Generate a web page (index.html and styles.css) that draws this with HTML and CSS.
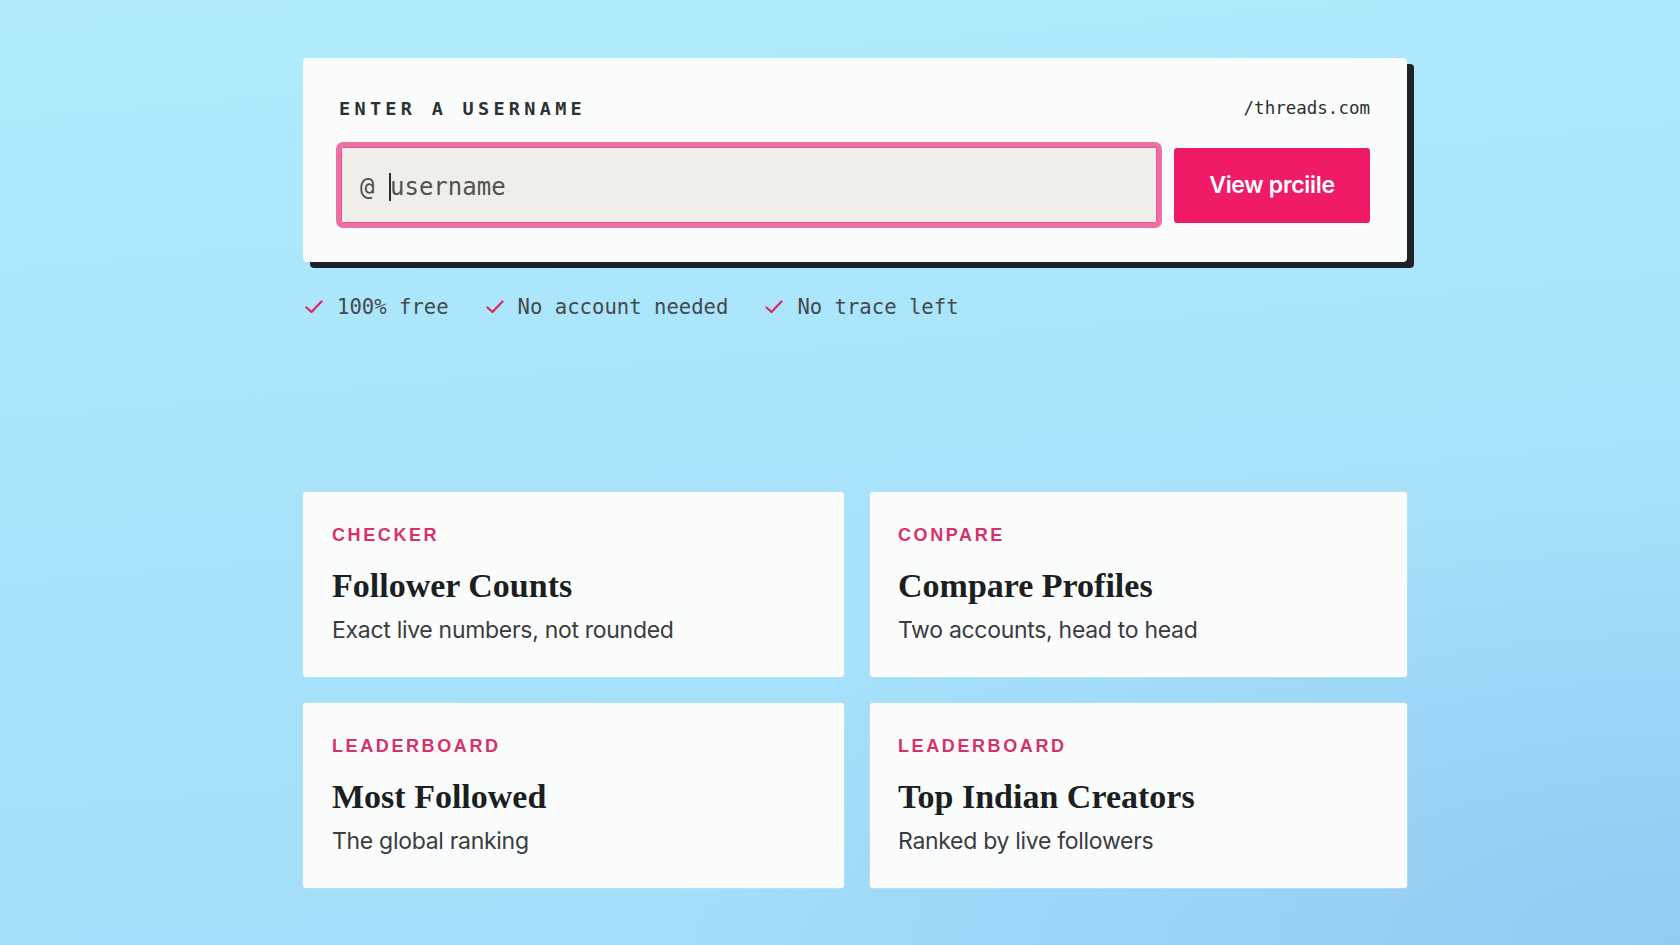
FILE: index.html
```html
<!DOCTYPE html>
<html lang="en">
<head>
<meta charset="utf-8">
<title>Threads profile viewer</title>
<link rel="stylesheet" href="styles.css">
</head>
<body>
<main class="page">
  <section class="search-card">
    <div class="search-head">
      <span class="search-label">ENTER A USERNAME</span>
      <span class="search-domain">/threads.com</span>
    </div>
    <div class="search-row">
      <div class="field">
        <span class="field-at">@</span>
        <span class="field-caret"></span>
        <span class="field-placeholder">username</span>
      </div>
      <button class="view-btn" type="button">View prciile</button>
    </div>
  </section>

  <ul class="perks">
    <li class="perk">
      <svg class="tick" viewBox="0 0 18 14" width="18" height="14"><path d="M1.5 7.5 L6.5 12 L16.5 1.5"/></svg>
      <span>100% free</span>
    </li>
    <li class="perk">
      <svg class="tick" viewBox="0 0 18 14" width="18" height="14"><path d="M1.5 7.5 L6.5 12 L16.5 1.5"/></svg>
      <span>No account needed</span>
    </li>
    <li class="perk">
      <svg class="tick" viewBox="0 0 18 14" width="18" height="14"><path d="M1.5 7.5 L6.5 12 L16.5 1.5"/></svg>
      <span>No trace left</span>
    </li>
  </ul>

  <section class="tools">
    <a class="tool" href="#">
      <span class="tool-tag">CHECKER</span>
      <span class="tool-title">Follower Counts</span>
      <span class="tool-desc">Exact live numbers, not rounded</span>
    </a>
    <a class="tool" href="#">
      <span class="tool-tag">CONPARE</span>
      <span class="tool-title">Compare Profiles</span>
      <span class="tool-desc">Two accounts, head to head</span>
    </a>
    <a class="tool" href="#">
      <span class="tool-tag">LEADERBOARD</span>
      <span class="tool-title">Most Followed</span>
      <span class="tool-desc">The global ranking</span>
    </a>
    <a class="tool" href="#">
      <span class="tool-tag">LEADERBOARD</span>
      <span class="tool-title">Top Indian Creators</span>
      <span class="tool-desc">Ranked by live followers</span>
    </a>
  </section>
</main>
</body>
</html>
```

FILE: styles.css
```css
* {
  box-sizing: border-box;
}

html,
body {
  margin: 0;
  height: 100%;
}

body {
  background:
    radial-gradient(ellipse 60% 50% at 100% 100%, rgba(140, 196, 240, 0.75), rgba(140, 196, 240, 0) 100%),
    linear-gradient(175deg, #b1ebfd 0%, #a9e4fb 45%, #a3ddfa 100%);
  font-family: "Liberation Sans", Arial, sans-serif;
  overflow: hidden;
}

.page {
  width: 1104px;
  margin: 0 0 0 303px;
  padding-top: 58px;
}

/* search card */
.search-card {
  background: #fbfdfd;
  border-radius: 4px;
  box-shadow: 7px 6px 0 #1d2226;
  padding: 38px 37px 34px 33px;
}

.search-head {
  display: flex;
  justify-content: space-between;
  align-items: center;
  height: 24px;
  margin-bottom: 22px;
}

.search-label {
  font-family: "DejaVu Sans Mono", monospace;
  font-weight: 700;
  font-size: 18.5px;
  letter-spacing: 4.3px;
  color: #2e3133;
  padding-left: 3px;
}

.search-domain {
  font-family: "DejaVu Sans Mono", monospace;
  font-size: 17.5px;
  color: #2b2e30;
}

.search-row {
  display: flex;
  align-items: center;
  gap: 12px;
}

.field {
  flex: 1;
  height: 86px;
  display: flex;
  align-items: center;
  background: #efeee9;
  border: 5px solid #ed6fa6;
  border-radius: 7px;
  box-shadow: inset 0 0 0 1px #e5558f;
  padding: 3px 0 0 19px;
  font-family: "DejaVu Sans Mono", monospace;
  font-size: 24px;
  color: #4b4d4f;
}

.field-at {
  width: 29px;
}

.field-caret {
  width: 2px;
  height: 28px;
  background: #2b2d2f;
  margin-right: -1px;
}

.field-placeholder {
  color: #4f5153;
}

.view-btn {
  width: 196px;
  height: 75px;
  border: 0;
  border-radius: 3px;
  background: #ef1a68;
  color: #fff;
  font-family: Inter, "Liberation Sans", sans-serif;
  font-weight: 600;
  font-size: 23px;
  letter-spacing: -0.3px;
}

/* perks row */
.perks {
  list-style: none;
  margin: 31px 0 0;
  padding: 0 0 0 2px;
  display: flex;
  gap: 37px;
  height: 28px;
}

.perk {
  display: flex;
  align-items: center;
  gap: 14px;
  font-family: "DejaVu Sans Mono", monospace;
  font-size: 20.6px;
  line-height: 28px;
  color: #45494c;
}

.tick {
  fill: none;
  stroke: #e3245f;
  stroke-width: 2.2;
  stroke-linecap: round;
  stroke-linejoin: round;
}

/* tool cards */
.tools {
  margin-top: 171px;
  display: grid;
  grid-template-columns: 541px 537px;
  gap: 26px;
}

.tool {
  display: flex;
  flex-direction: column;
  height: 185px;
  padding: 33px 28px 0 29px;
  background: #fbfdfd;
  border-radius: 3px;
  box-shadow: 0 0 0 1px rgba(200, 225, 235, 0.5);
  text-decoration: none;
}

.tool + .tool:nth-child(even) {
  padding-left: 28px;
}

.tool-tag {
  font-family: "Liberation Sans", Arial, sans-serif;
  font-weight: 700;
  font-size: 18px;
  line-height: 20px;
  letter-spacing: 2.6px;
  color: #d8306c;
}

.tool-title {
  margin-top: 21px;
  font-family: "Liberation Serif", "Times New Roman", serif;
  font-weight: 700;
  font-size: 34px;
  line-height: 40px;
  color: #1c1f21;
}

.tool-desc {
  margin-top: 9px;
  font-family: Inter, "Liberation Sans", sans-serif;
  font-size: 23px;
  line-height: 30px;
  letter-spacing: -0.3px;
  color: #393c3f;
}
```
